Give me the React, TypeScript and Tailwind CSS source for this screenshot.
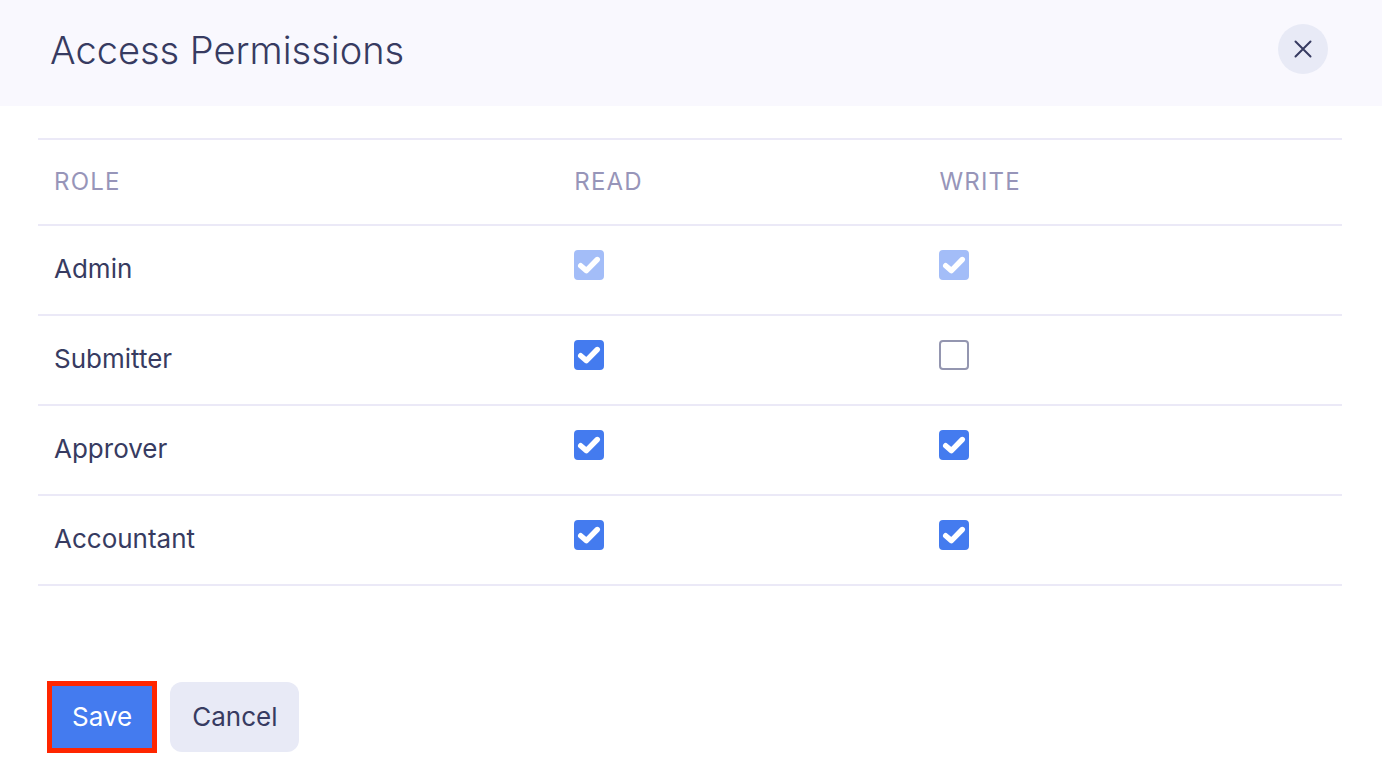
import { useState } from 'react';

interface Permission {
  role: string;
  read: boolean;
  write: boolean;
  locked?: boolean;
}

type Access = 'read' | 'write';

const defaultPermissions: Permission[] = [
  { role: 'Admin', read: true, write: true, locked: true },
  { role: 'Submitter', read: true, write: false },
  { role: 'Approver', read: true, write: true },
  { role: 'Accountant', read: true, write: true },
];

interface CheckboxProps {
  label: string;
  checked: boolean;
  disabled?: boolean;
  onChange: () => void;
}

function Checkbox({ label, checked, disabled, onChange }: CheckboxProps) {
  return (
    <label className="relative block size-[30px]">
      <input
        type="checkbox"
        aria-label={label}
        checked={checked}
        disabled={disabled}
        onChange={onChange}
        className="block size-[30px] appearance-none rounded-sm border-2 border-[#9496b0] bg-white checked:border-[#447bef] checked:bg-[#447bef] disabled:border-[#a3bdf8] disabled:bg-[#a3bdf8]"
      />
      {checked && (
        <svg
          className="pointer-events-none absolute inset-0"
          width="30"
          height="30"
          viewBox="0 0 30 30"
          fill="none"
          stroke="#fff"
          strokeWidth="5.4"
          strokeLinecap="round"
          strokeLinejoin="round"
        >
          <path d="M6.7 15.7L12.4 20.6L23.3 9.5" />
        </svg>
      )}
    </label>
  );
}

export default function App() {
  const [permissions, setPermissions] = useState<Permission[]>(defaultPermissions);

  const toggle = (role: string, access: Access) => {
    setPermissions((rows) => rows.map((row) => (row.role === role ? { ...row, [access]: !row[access] } : row)));
  };

  return (
    <div className="min-h-screen bg-white font-['Inter',sans-serif] text-[#373b61]">
      {/* Header */}
      <header className="flex items-start justify-between bg-[#f9f8fe] pt-6 pr-[54px] pb-[30px] pl-[50px]">
        <h1 className="text-[38px] leading-[52px] font-light">Access Permissions</h1>
        <button type="button" aria-label="Close" className="flex size-[50px] items-center justify-center rounded-full bg-[#e8eaf6]">
          <svg width="18" height="18" viewBox="0 0 18 18" fill="none" stroke="currentColor" strokeWidth="2" strokeLinecap="round">
            <path d="M1.5 1.5l15 15M16.5 1.5l-15 15" />
          </svg>
        </button>
      </header>

      <main className="pt-8 pr-10 pb-6 pl-[38px]">
        <table className="w-full table-fixed border-separate border-spacing-0 border-t-2 border-[#ebe9f7] text-left">
          <thead>
            <tr className="text-2xl leading-9 tracking-wider text-[#9795b9]">
              <th scope="col" className="w-[39.9%] border-b-2 border-[#ebe9f7] px-4 py-6 font-normal">ROLE</th>
              <th scope="col" className="w-[28%] border-b-2 border-[#ebe9f7] px-4 py-6 font-normal">READ</th>
              <th scope="col" className="border-b-2 border-[#ebe9f7] px-4 py-6 font-normal">WRITE</th>
            </tr>
          </thead>
          <tbody>
            {permissions.map((row) => (
              <tr key={row.role} className="h-[90px] align-top">
                <th scope="row" className="border-b-2 border-[#ebe9f7] px-4 py-6 text-[26px] leading-[38px] font-normal">{row.role}</th>
                <td className="border-b-2 border-[#ebe9f7] px-4 py-6">
                  <Checkbox label={`${row.role} read`} checked={row.read} disabled={row.locked} onChange={() => toggle(row.role, 'read')} />
                </td>
                <td className="border-b-2 border-[#ebe9f7] px-4 py-6">
                  <Checkbox label={`${row.role} write`} checked={row.write} disabled={row.locked} onChange={() => toggle(row.role, 'write')} />
                </td>
              </tr>
            ))}
          </tbody>
        </table>

        {/* Actions */}
        <div className="mt-24 flex gap-3.5 pl-2.5 text-[26px] leading-[30px]">
          <button type="button" className="bg-[#447bef] px-6 py-5 text-white outline-[5px] -outline-offset-4 outline-[#ff2600]">
            Save
          </button>
          <button type="button" className="rounded-xl bg-[#e8eaf6] px-[22px] py-5">
            Cancel
          </button>
        </div>
      </main>
    </div>
  );
}
